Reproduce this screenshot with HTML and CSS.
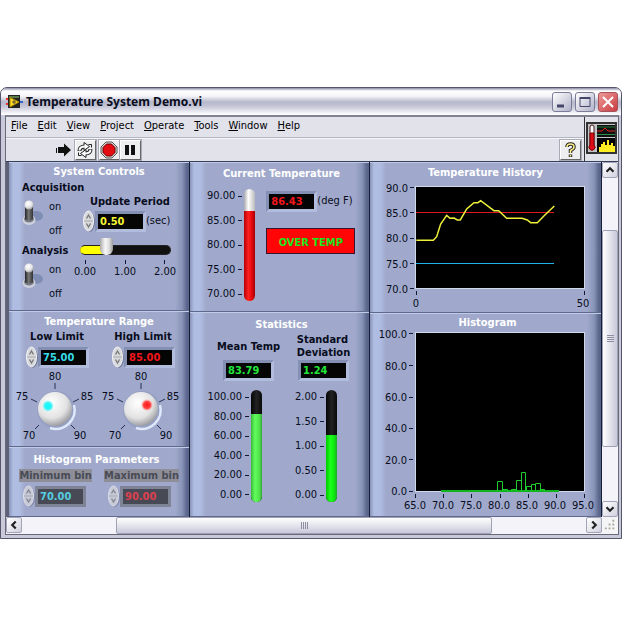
FILE: index.html
```html
<!DOCTYPE html>
<html lang="en">
<head>
<meta charset="utf-8">
<title>Temperature System Demo.vi</title>
<link rel="stylesheet" href="styles.css">
</head>
<body>
<svg class="defs" aria-hidden="true">
  <defs>
    <radialGradient id="ball" cx=".4" cy=".32" r=".75"><stop offset="0" stop-color="#fff"/><stop offset=".6" stop-color="#e2e2e2"/><stop offset="1" stop-color="#8c8d93"/></radialGradient>
    <linearGradient id="stem" x2="1"><stop offset="0" stop-color="#222"/><stop offset=".45" stop-color="#777"/><stop offset="1" stop-color="#333"/></linearGradient>
    <radialGradient id="cyan"><stop offset="0" stop-color="#0ff"/><stop offset=".6" stop-color="#3ff0f4"/><stop offset="1" stop-color="#bff" stop-opacity=".2"/></radialGradient>
    <radialGradient id="red"><stop offset="0" stop-color="#ff1414"/><stop offset=".6" stop-color="#f44"/><stop offset="1" stop-color="#fbb" stop-opacity=".2"/></radialGradient>
  </defs>
  <symbol id="spin" viewBox="0 0 12 22">
    <ellipse cx="6.500" cy="12" rx="5.500" ry="10" fill="#6f7898"/>
    <ellipse cx="5.500" cy="11" rx="5" ry="10" fill="#d8d9dc" stroke="#f4f4f6"/>
    <path d="M1 11h9" stroke="#aaa"/><path d="M3.500 8.500L5.500 5 7.500 8.500M3.500 13.500L5.500 17 7.500 13.500" fill="none" stroke="#777" stroke-width="1.300"/>
  </symbol>
  <symbol id="toggle" viewBox="0 0 22 26">
    <ellipse cx="14" cy="16" rx="7" ry="5" fill="#7180a8" opacity=".7"/>
    <ellipse cx="7" cy="20" rx="6.500" ry="5" fill="#cfd2dc"/><ellipse cx="7" cy="19" rx="5" ry="3.500" fill="#777b88"/>
    <path d="M3 5h8v14q-4 3-8 0z" fill="url(#stem)"/><ellipse cx="7" cy="5" rx="4.500" ry="4.500" fill="url(#ball)"/>
  </symbol>
  <symbol id="knob" viewBox="14 368 82 72">
    <path d="M55 382v6M31 398l6 3M79 398l-6 3M39 424l-4 4M71 424l4 4" stroke="#26304e" fill="none"/>
    <circle cx="56" cy="409" r="19" fill="#95a0c4"/>
    <path d="M50 427A19 19 0 0 0 74 404" fill="none" stroke="#e0e8fb" stroke-width="2.500"/>
    <circle cx="55" cy="408" r="17" fill="url(#ball)"/>
  </symbol>
</svg>

<main class="window">
  <header class="titlebar">
    <svg width="17" height="16" viewBox="0 0 17 16"><path d="M0 5h3M0 10h3" stroke="#e33" stroke-width="2"/><path d="M14 8h3" stroke="#36c" stroke-width="2"/><rect x="2" y="1" width="12" height="13" fill="#222"/><path d="M3 2h10v2H3z" fill="#5a7a4a"/><path d="M4 3.500l9 4.500-9 5z" fill="#fd2" stroke="#a80"/><path d="M6 8h4M8 6v4" stroke="#543"/></svg>
    <h1>Temperature System Demo.vi</h1>
    <button class="cap" aria-label="Minimize"><svg viewBox="0 0 18 18"><path d="M4 13h7" stroke="#44466a" stroke-width="3"/></svg></button>
    <button class="cap" aria-label="Maximize"><svg viewBox="0 0 18 18"><path d="M4 5.500h10v8H4z" fill="none" stroke="#44466a"/><path d="M3.500 5h11" stroke="#44466a" stroke-width="2"/></svg></button>
    <button class="cap close" aria-label="Close"><svg viewBox="0 0 18 18"><path d="M4 4l10 10M14 4L4 14" stroke="#fff" stroke-width="2"/></svg></button>
  </header>

  <div class="client">
    <div class="bars">
      <div class="commands">
        <nav class="menu">
          <a href="#"><u>F</u>ile</a><a href="#"><u>E</u>dit</a><a href="#"><u>V</u>iew</a><a href="#"><u>P</u>roject</a><a href="#"><u>O</u>perate</a><a href="#"><u>T</u>ools</a><a href="#"><u>W</u>indow</a><a href="#"><u>H</u>elp</a>
        </nav>
        <div class="toolbar">
          <button class="tool flat" aria-label="Run"><svg viewBox="0 0 18 18"><path d="M1 7h1v5H1zM3 6h6V2.500L16 9l-7 6.500V12H3z" fill="#111"/></svg></button>
          <button class="tool" aria-label="Run continuously"><svg viewBox="0 0 18 18"><g fill="none" stroke="#222" stroke-width="4"><path d="M3.500 10Q3.500 5.500 9 5.500M14.500 8q0 4.500-5.500 4.500"/></g><path d="M8 1.500l5.500 4L8 9.500zM10 8.500v8l-5.500-4z" fill="#fff" stroke="#222"/><g fill="none" stroke="#fff" stroke-width="2"><path d="M3.500 9.500Q3.500 5.500 9 5.500M14.500 8.500q0 4-5.500 4"/></g><path d="M12.500 3.500h3v3M5.500 14.500h-3v-3" fill="none" stroke="#222"/></svg></button>
          <button class="tool stop" aria-label="Abort"><svg viewBox="0 0 18 18"><path d="M6 1h6l5 5v6l-5 5H6l-5-5V6z" fill="#ddd" stroke="#555"/><path d="M6.500 3h5L15 6.500v5L11.500 15h-5L3 11.500v-5z" fill="#e60d12" stroke="#600"/></svg></button>
          <button class="tool" aria-label="Pause"><svg viewBox="0 0 18 18"><path d="M4 4h4v10H4zM10 4h4v10h-4z" fill="#111"/></svg></button>
          <button class="tool help" aria-label="Context help"><svg viewBox="0 0 18 18"><path d="M6 6q0-3 3.500-3T13 6q0 2-3.500 3.500V12M9.500 13.500v2.500" fill="none" stroke="#222" stroke-width="3.500"/><path d="M6 6q0-3 3.500-3T13 6q0 2-3.500 3.500V12M9.500 14v1.500" fill="none" stroke="#fff38a" stroke-width="1.500"/></svg></button>
        </div>
      </div>
      <div class="viicon"><svg width="31" height="32" viewBox="0 0 31 32"><rect width="31" height="32" fill="#333"/><rect x="2" y="2" width="27" height="28" fill="#c4c4c8"/><rect x="11" y="3" width="18" height="12" fill="#111"/><rect x="11" y="16" width="18" height="14" fill="#050505"/><path d="M11 5h18" stroke="#1a7a3a"/><path d="M11 9h5l3-3 3 3h7" fill="none" stroke="#d22"/><path d="M11 12.500h18" stroke="#2a8a4a"/><path d="M13 30v-5h2v-3h2v-2h2v3h2v-5h2v5h2v-2h2v3h2v6z" fill="#fe2"/><rect x="4" y="3" width="4" height="22" rx="2" fill="#fff" stroke="#411"/><path d="M4 11h4v12a3 3 0 1 1-4 0z" fill="#e00b18" stroke="#700"/></svg></div>
    </div>

    <div class="viewport">
      <div class="panel">
        <div class="column first">
          <section class="group controls">
            <h2>System Controls</h2>
            <div class="split">
              <div class="switches">
                <b id="acq">Acquisition</b>
                <div class="switch"><button role="switch" aria-checked="true" aria-labelledby="acq"><svg><use href="#toggle"/></svg></button><span>on</span><span>off</span></div>
                <b id="ana">Analysis</b>
                <div class="switch"><button role="switch" aria-checked="true" aria-labelledby="ana"><svg><use href="#toggle"/></svg></button><span>on</span><span>off</span></div>
              </div>
              <div class="period">
                <label for="period">Update Period</label>
                <div class="numeric"><svg class="spin"><use href="#spin"/></svg><div class="well"><input id="period" class="yellow" value="0.50"></div><span>(sec)</span></div>
                <input type="range" min="0" max="2" step="0.1" value="0.5" aria-label="Update period slider">
                <div class="hscale"><span>0.00</span><span>1.00</span><span>2.00</span></div>
              </div>
            </div>
          </section>
          <section class="group range">
            <h2>Temperature Range</h2>
            <div class="pair">
              <div class="limit"><label for="low">Low Limit</label>
                <div class="numeric"><svg class="spin"><use href="#spin"/></svg><div class="well"><input id="low" class="cyan" value="75.00"></div></div>
                <svg class="dial" viewBox="14 368 82 72"><use href="#knob" x="14" y="368" width="82" height="72"/><circle cx="48" cy="405" r="6" fill="url(#cyan)"/><g text-anchor="middle"><text x="55" y="379">80</text><text x="22" y="399">75</text><text x="87" y="399">85</text><text x="29" y="438">70</text><text x="80" y="438">90</text></g></svg></div>
              <div class="limit"><label for="high">High Limit</label>
                <div class="numeric"><svg class="spin"><use href="#spin"/></svg><div class="well"><input id="high" class="red" value="85.00"></div></div>
                <svg class="dial" viewBox="14 368 82 72"><use href="#knob" x="14" y="368" width="82" height="72"/><circle cx="61" cy="404" r="6" fill="url(#red)"/><g text-anchor="middle"><text x="55" y="379">80</text><text x="22" y="399">75</text><text x="87" y="399">85</text><text x="29" y="438">70</text><text x="80" y="438">90</text></g></svg></div>
            </div>
          </section>
          <section class="group params">
            <h2>Histogram Parameters</h2>
            <div class="pair dim">
              <div class="limit"><label for="min">Minimum bin</label>
                <div class="numeric"><svg class="spin"><use href="#spin"/></svg><div class="well"><input id="min" class="cyan" value="70.00" disabled></div></div></div>
              <div class="limit"><label for="max">Maximum bin</label>
                <div class="numeric"><svg class="spin"><use href="#spin"/></svg><div class="well"><input id="max" class="red" value="90.00" disabled></div></div></div>
            </div>
          </section>
        </div>

        <div class="column">
          <section class="group current">
            <h2>Current Temperature</h2>
            <div class="split">
              <div class="gauge"><div class="vscale"><span>90.00</span><span>85.00</span><span>80.00</span><span>75.00</span><span>70.00</span></div><div class="tube glass"><i style="height:80%"></i></div></div>
              <div class="reading">
                <div class="numeric"><div class="well"><input class="red" value="86.43" aria-label="Current temperature" readonly></div><span>(deg F)</span></div>
                <output class="alarm">OVER TEMP</output>
              </div>
            </div>
          </section>
          <section class="group stats">
            <h2>Statistics</h2>
            <div class="pair">
              <div class="stat"><label for="mean">Mean Temp</label>
                <div class="well"><input id="mean" class="green" value="83.79" readonly></div>
                <div class="gauge"><div class="vscale"><span>100.00</span><span>80.00</span><span>60.00</span><span>40.00</span><span>20.00</span><span>0.00</span></div><div class="tube mean"><i style="height:79%"></i></div></div></div>
              <div class="stat"><label for="dev">Standard<br>Deviation</label>
                <div class="well"><input id="dev" class="green" value="1.24" readonly></div>
                <div class="gauge"><div class="vscale"><span>2.00</span><span>1.50</span><span>1.00</span><span>0.50</span><span>0.00</span></div><div class="tube dev"><i style="height:60%"></i></div></div></div>
            </div>
          </section>
        </div>

        <div class="column last">
          <section class="group history">
            <h2>Temperature History</h2>
            <svg class="chart" width="232" height="128" viewBox="370 183 232 128">
              <rect x="415" y="186" width="170" height="103" fill="#d0d8ec"/><rect x="416" y="187" width="168" height="101"/>
              <path d="M410 187.500h4M410 212.500h4M410 238.500h4M410 263.500h4M410 288.500h4M416.500 291v4M584.500 291v4" stroke="#111a33"/>
              <g text-anchor="end"><text x="408" y="192">90.0</text><text x="408" y="217">85.0</text><text x="408" y="242">80.0</text><text x="408" y="268">75.0</text><text x="408" y="293">70.0</text></g>
              <g text-anchor="middle"><text x="416" y="307">0</text><text x="583" y="307">50</text></g>
              <rect x="416" y="212" width="138" height="1" fill="#e01822"/><rect x="416" y="263" width="138" height="1" fill="#20b4ec"/>
              <path transform="translate(366 160) scale(.3333)" d="M151 241H202L212 230 224 192 242 166 252 175 264 174 274 180 283 180 302 147 324 128 336 128 344 122 384 152 398 152 422 175 468 175 484 180 494 188 514 188 536 166 565 138" fill="none" stroke="#eef03a" stroke-width="4.500"/>
            </svg>
          </section>
          <section class="group histogram">
            <h2>Histogram</h2>
            <svg class="chart" width="232" height="185" viewBox="370 331 232 185">
              <rect x="415" y="332" width="170" height="160" fill="#d0d8ec"/><rect x="416" y="333" width="168" height="158"/>
              <path d="M409 333.500h4M409 365.500h4M409 397.500h4M409 428.500h4M409 459.500h4M409 491.500h4M415.500 494v4M443.500 494v4M471.500 494v4M500.500 494v4M528.500 494v4M556.500 494v4M584.500 494v4" stroke="#111a33"/>
              <g text-anchor="end"><text x="407" y="338">100.0</text><text x="407" y="370">80.0</text><text x="407" y="401">60.0</text><text x="407" y="432">40.0</text><text x="407" y="464">20.0</text><text x="407" y="495">0.0</text></g>
              <g text-anchor="middle"><text x="415" y="509">65.0</text><text x="443" y="509">70.0</text><text x="471" y="509">75.0</text><text x="499" y="509">80.0</text><text x="527" y="509">85.0</text><text x="555" y="509">90.0</text><text x="583" y="509">95.0</text></g>
              <rect x="441" y="490" width="118" height="2" fill="#12b41e"/>
              <path d="M497.500 491v-9.500h5v9.500M502.500 489.500h5v2M511.500 491v-1.500h5M516.500 491v-10.500h5v10.500M521.500 491v-18.500h4v18.500M526.500 491v-4.500h5v4.500M531.500 491v-6.500h4v6.500M535.500 491v-7.500h5v7.500M540.500 489.500h4v2" fill="none" stroke="#1fce2c"/>
            </svg>
          </section>
        </div>
      </div>
      <div class="scroll vertical">
        <button aria-label="Scroll up"><svg viewBox="0 0 16 16"><path d="M4 10l4-4 4 4" fill="none" stroke="#222" stroke-width="2.500"/></svg></button>
        <i class="before"></i><div class="thumb"><b></b></div><i class="after"></i>
        <button aria-label="Scroll down"><svg viewBox="0 0 16 16"><path d="M4 6l4 4 4-4" fill="none" stroke="#222" stroke-width="2.500"/></svg></button>
      </div>
      <div class="scroll horizontal">
        <button aria-label="Scroll left"><svg viewBox="0 0 16 16"><path d="M10 4L6 8l4 4" fill="none" stroke="#222" stroke-width="2.500"/></svg></button>
        <i class="before"></i><div class="thumb"><b></b></div><i class="after"></i>
        <button aria-label="Scroll right"><svg viewBox="0 0 16 16"><path d="M6 4l4 4-4 4" fill="none" stroke="#222" stroke-width="2.500"/></svg></button>
      </div>
      <svg class="grip" viewBox="0 0 17 18"><path d="M11 4h2M11 8h2M7 8h2M11 12h2M7 12h2M3 12h2" stroke="#aaa99c" stroke-width="2"/></svg>
    </div>
  </div>
</main>
</body>
</html>
```
FILE: styles.css
```css
* { box-sizing: border-box; }
body { margin: 0; padding: 87px 2px 0 0; background: #fff; color: #080c1c; font: 11px/14px "DejaVu Sans Condensed", "DejaVu Sans", sans-serif; }
.defs { position: absolute; width: 0; height: 0; }
button { padding: 0; font: inherit; }
svg { display: block; }
text { font: 11px "DejaVu Sans Condensed", "DejaVu Sans", sans-serif; fill: #080c1c; }
h1, h2 { margin: 0; font-weight: bold; }

.window { border: 1px solid #55556b; border-radius: 7px 7px 0 0; background: #c9cad9; padding: 0 2px 3px 4px; overflow: hidden; }
.titlebar { display: flex; align-items: center; gap: 3px; height: 27px; margin: 0 -2px 0 -4px; padding: 0 3px 0 5px; background: linear-gradient(#8b8da6 0, #fff 3px, #f5f5fa 8px, #b7b8cb 14px, #c2c3d4 18px, #fafafe 26px, #fff); }
.titlebar h1 { flex: 1; font: bold 12px/18px "Noto Sans", sans-serif; }
.cap { width: 20px; height: 20px; border: 1px solid #7b7c97; border-radius: 3px; background: linear-gradient(135deg, #fff, #b1b2c9); }
.cap.close { border-color: #a5525a; background: linear-gradient(135deg, #ee9a96, #c83c42); }

.client { border: 1px solid #686a7c; border-top: 2px solid #808291; }
.bars { display: flex; background: #e2e2eb; border-bottom: 1px solid #37405a; }
.commands { flex: 1; border-right: 1px solid #333; }
.menu { display: flex; gap: 10px; height: 21px; padding: 2px 5px 0; border-bottom: 1px solid #b4b5c3; }
.menu a { color: #000; text-decoration: none; }
.toolbar { display: flex; height: 23px; padding: 1px 3px 1px 48px; border-top: 1px solid #f7f7fa; }
.tool { width: 21px; height: 20px; border: 1px solid; border-color: #fff #666 #666 #fff; background: #eeeef1; box-shadow: 0 0 0 1px #a9aab5; }
.tool svg { width: 18px; height: 18px; }
.tool.flat { border-color: transparent; background: none; box-shadow: none; }
.tool.stop { margin-left: 3px; }
.tool.help { margin-left: auto; }
.viicon { padding: 5px 1px 0; width: 33px; }

.viewport { display: grid; grid-template-columns: 1fr 16px; background: #f5f5f7; }
.panel { display: grid; grid-template-columns: 184fr 180fr 232fr; }
.column { display: flex; flex-direction: column; min-width: 0; border-right: 1px solid #171c36; background: linear-gradient(90deg, #8793b7 0, #b0bde3 4px, #b0bde3 10px, #a0a9cb 16px, #a0a9cb calc(100% - 14px), #8894b8 calc(100% - 7px), #59658a calc(100% - 2px)); }
.column.first { border-left: 3px solid #5d6178; }
.group { border-bottom: 1px solid #5e6a8d; box-shadow: inset 0 1px #c1cbe8; }
.group h2 { font-size: 11px; line-height: 14px; color: #fff; text-align: center; }
.group b, .group label { display: block; font-weight: bold; }
.split, .pair, .gauge { display: flex; }

.controls { height: 149px; padding-top: 3px; }
.switches { width: 66px; padding: 2px 0 0 13px; white-space: nowrap; }
.switch { display: grid; grid-template-columns: 27px 1fr; row-gap: 10px; align-content: start; padding-top: 5px; height: 49px; }
.switch button { grid-row: 1 / 3; border: 0; background: none; width: 22px; height: 26px; align-self: start; }
.switch svg { width: 22px; height: 26px; }
.period { padding-top: 16px; margin-left: 5px; }
.period label { padding-left: 10px; }
.numeric { display: flex; align-items: center; height: 24px; }
.spin { width: 12px; height: 22px; flex: none; }
.well { border: 3px solid; border-color: #8490b3 #b2bddd #b2bddd #8490b3; }
.well input { display: block; width: 45px; height: 15px; border: 0; padding: 0 2px; background: #050505; font: bold 11px/15px "DejaVu Sans Condensed", "DejaVu Sans", sans-serif; }
.well .yellow { color: #f6f632; } .well .cyan { color: #35dde8; } .well .red { color: #f4151d; } .well .green { color: #22e63a; }
.period .numeric { padding-left: 3px; }
input[type="range"] { appearance: none; display: block; width: 91px; height: 18px; margin: 8px 0 0; background: none; }
input[type="range"]::-webkit-slider-runnable-track { height: 10px; border-radius: 5px; background: linear-gradient(90deg, #ff0 28%, #111 28%); border: 1px solid #222; border-left-color: #cc0; }
input[type="range"]::-webkit-slider-thumb { appearance: none; width: 13px; height: 17px; margin-top: -8px; border-radius: 2px 2px 6px 6px; background: linear-gradient(90deg, #aaa, #f7f7f7 40%, #ddd 70%, #999); }
.hscale { display: flex; justify-content: space-between; width: 102px; margin: 0 -8px 0 -6px; }
.hscale span { text-align: center; }
.hscale span::before { content: ""; display: block; width: 1px; height: 4px; margin: 1px auto 1px; background: #111a33; }

.range { height: 136px; padding-top: 4px; }
.pair .limit { flex: 1; text-align: center; }
.range .pair { padding: 0 3px 0 5px; }
.range .limit label { margin-top: 1px; }
.range .numeric { padding-left: 12px; margin-top: 1px; }
.dial { width: 82px; height: 72px; }
.params { flex: 1; padding-top: 6px; }
.params h2 { padding-right: 5px; }
.dim { gap: 12px; padding: 2px 10px 6px 10px; }
.dim label { color: #494b55; background: #8d8e98; line-height: 13px; white-space: nowrap; }
.dim .numeric { margin: 2px 0 0 4px; }
.dim .spin, .dim .well { opacity: .7; }
.dim .well { border-color: #70747f; }
.dim input { background: #222; }

.current { height: 150px; padding-top: 5px; }
.current h2, .stats h2, .histogram h2 { padding-left: 4px; }
.current .split { padding: 8px 0 0 17px; gap: 11px; }
.vscale { display: flex; flex-direction: column; justify-content: space-between; }
.vscale span { display: flex; align-items: center; justify-content: flex-end; gap: 3px; line-height: 14px; }
.vscale span::after { content: ""; width: 4px; height: 1px; background: #111a33; }
.gauge { gap: 2px; }
.tube { flex: none; display: flex; align-items: flex-end; width: 11px; height: 112px; border-radius: 6px; overflow: hidden; background: linear-gradient(90deg, #050505, #222, #0a0a0a); }
.tube i { width: 100%; background: linear-gradient(90deg, #35b93a, #61fc5c 35%, #50e44b 75%, #37a63c); }
.tube.dev i { background: linear-gradient(90deg, #00c800, #1bff1b 40%, #0be80e 75%, #24a72b); }
.tube.glass { background: linear-gradient(90deg, #aaa, #fff 40%, #bbb); }
.tube.glass i { background: linear-gradient(90deg, #b40007, #ff2020 40%, #e4060d 70%, #a50006); }
.alarm { display: block; margin-top: 15px; width: 89px; border: 1px solid #391431; background: #ff0505; color: #18e61f; font-weight: bold; line-height: 20px; padding-top: 4px; text-align: center; }
.reading .numeric span { white-space: nowrap; }
.stats { flex: 1; padding-top: 6px; }
.stats .pair { padding-left: 21px; }
.stat { width: 75px; }
.stat label { height: 26px; margin-top: 1px; display: flex; align-items: center; justify-content: center; line-height: 13px; white-space: nowrap; }
.stat .well { width: 51px; margin: 1px auto 9px; }
.stat .gauge { justify-content: flex-end; padding-right: 24px; }

.history { height: 151px; padding-top: 4px; }
.histogram { flex: 1; padding-top: 3px; }
.chart { margin-top: 3px; overflow: visible; }
.histogram .chart { margin-top: 1px; }

.scroll { display: flex; background: #f3f3f9; }
.scroll button { flex: none; width: 16px; height: 16px; border: 1px solid #a3a4b7; border-radius: 2px; background: linear-gradient(135deg, #fff, #d0d1df); }
.scroll button svg { width: 14px; height: 14px; }
.vertical { flex-direction: column; }
.thumb { display: flex; align-items: center; justify-content: center; border: 1px solid #a0a1b4; border-radius: 2px; background: linear-gradient(90deg, #fff, #c8c9da); }
.horizontal .thumb { background: linear-gradient(#fff, #c8c9da); }
.vertical .before { flex: 52; } .vertical .thumb { flex: 215; } .vertical .after { flex: 54; }
.horizontal .before { flex: 94; } .horizontal .thumb { flex: 376; } .horizontal .after { flex: 94; }
.vertical .thumb b { width: 7px; height: 7px; background: repeating-linear-gradient(#8d8ea2 0 1px, transparent 1px 2px); }
.horizontal .thumb b { width: 7px; height: 7px; background: repeating-linear-gradient(90deg, #8d8ea2 0 1px, transparent 1px 2px); }
.grip { width: 16px; height: 17px; }
```
